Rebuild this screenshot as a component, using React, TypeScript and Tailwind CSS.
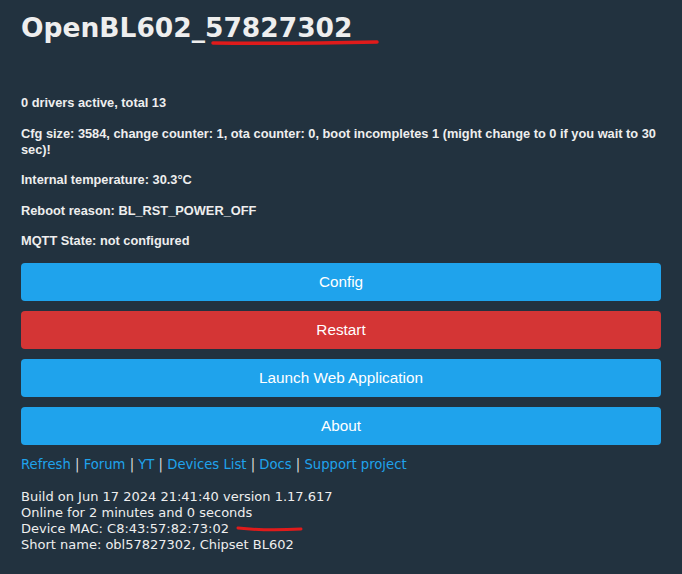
const info = [
  "0 drivers active, total 13",
  "Cfg size: 3584, change counter: 1, ota counter: 0, boot incompletes 1 (might change to 0 if you wait to 30 sec)!",
  "Internal temperature: 30.3°C",
  "Reboot reason: BL_RST_POWER_OFF",
  "MQTT State: not configured",
];

const buttons = [
  { label: "Config", red: false },
  { label: "Restart", red: true },
  { label: "Launch Web Application", red: false },
  { label: "About", red: false },
];

const links = ["Refresh", "Forum", "YT", "Devices List", "Docs", "Support project"];

export default function App() {
  return (
    <div className="min-h-[574px] w-full bg-[#22323f] text-[#eeeeee] px-[21px] pt-[12px] pb-4">
      <h1 className="relative inline-block text-[26.5px] font-bold leading-[32px] font-['DejaVu_Sans',sans-serif] text-[#eeeeee]">
        OpenBL602_57827302
        <svg className="absolute left-[190px] top-[27px]" width="170" height="8" viewBox="0 0 170 8">
          <path d="M2 4 Q 80 5 166 3" stroke="#e01b1b" strokeWidth="3.5" strokeLinecap="round" fill="none" />
        </svg>
      </h1>

      <div className="mt-[51px] flex flex-col gap-[14.5px] font-['Liberation_Sans',sans-serif] text-[12.8px] font-bold leading-[16px]">
        {info.map((t) => (
          <p key={t}>{t}</p>
        ))}
      </div>

      <div className="mt-[14px] flex flex-col gap-[10px]">
        {buttons.map((b) => (
          <button
            key={b.label}
            className={`h-[38px] w-full rounded-[4px] text-[15.3px] text-white font-['Liberation_Sans',sans-serif] ${
              b.red ? "bg-[#d43535]" : "bg-[#1fa3ec]"
            }`}
          >
            {b.label}
          </button>
        ))}
      </div>

      <div className="mt-[11px] font-['DejaVu_Sans',sans-serif] text-[13.2px] leading-[18px]">
        {links.map((l, i) => (
          <span key={l}>
            {i > 0 && <span className="text-[#dddddd]"> | </span>}
            <a className="text-[#1fa3ec]">{l}</a>
          </span>
        ))}
      </div>

      <div className="mt-[15px] font-['DejaVu_Sans',sans-serif] text-[13px] leading-[16px]">
        <div>Build on Jun 17 2024 21:41:40 version 1.17.617</div>
        <div>Online for 2 minutes and 0 seconds</div>
        <div className="relative">
          Device MAC: C8:43:57:82:73:02
          <svg className="absolute left-[215px] top-[4px]" width="68" height="8" viewBox="0 0 68 8">
            <path d="M2 3 Q 30 6 65 4" stroke="#e01b1b" strokeWidth="3" strokeLinecap="round" fill="none" />
          </svg>
        </div>
        <div>Short name: obl57827302, Chipset BL602</div>
      </div>
    </div>
  );
}
